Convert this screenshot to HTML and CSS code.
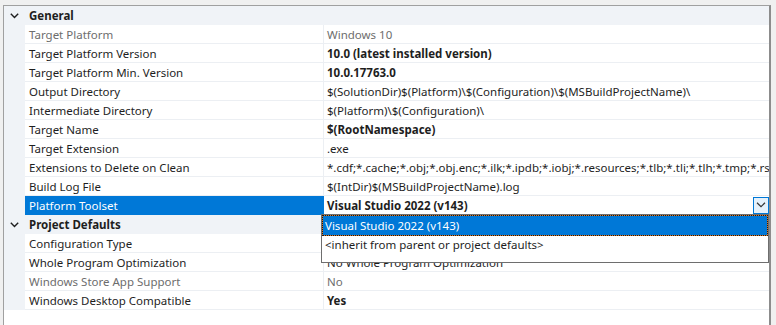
FILE: index.html
```html
<!DOCTYPE html>
<html lang="en">

<head>
    <meta charset="UTF-8" />
    <title>Property Pages</title>
    <link rel="stylesheet" href="styles.css">
</head>

<body>

    <div class="frame">

        <div class="category">
            <span class="toggle"><svg width="9" height="6" viewBox="0 0 9 6"><path d="M0.8 0.8 L4.5 4.5 L8.2 0.8" fill="none" stroke="#1e1e1e" stroke-width="1.4"/></svg></span>
            <span class="category-name">General</span>
        </div>
        <div class="prop">
            <span class="gutter"></span>
            <span class="name muted">Target Platform</span>
            <span class="value muted">Windows 10</span>
        </div>
        <div class="prop">
            <span class="gutter"></span>
            <span class="name">Target Platform Version</span>
            <span class="value bold">10.0 (latest installed version)</span>
        </div>
        <div class="prop">
            <span class="gutter"></span>
            <span class="name">Target Platform Min. Version</span>
            <span class="value bold">10.0.17763.0</span>
        </div>
        <div class="prop">
            <span class="gutter"></span>
            <span class="name">Output Directory</span>
            <span class="value">$(SolutionDir)$(Platform)\$(Configuration)\$(MSBuildProjectName)\</span>
        </div>
        <div class="prop">
            <span class="gutter"></span>
            <span class="name">Intermediate Directory</span>
            <span class="value">$(Platform)\$(Configuration)\</span>
        </div>
        <div class="prop">
            <span class="gutter"></span>
            <span class="name">Target Name</span>
            <span class="value bold">$(RootNamespace)</span>
        </div>
        <div class="prop">
            <span class="gutter"></span>
            <span class="name">Target Extension</span>
            <span class="value">.exe</span>
        </div>
        <div class="prop">
            <span class="gutter"></span>
            <span class="name">Extensions to Delete on Clean</span>
            <span class="value">*.cdf;*.cache;*.obj;*.obj.enc;*.ilk;*.ipdb;*.iobj;*.resources;*.tlb;*.tli;*.tlh;*.tmp;*.rsp;*.pgc;*.pgd</span>
        </div>
        <div class="prop">
            <span class="gutter"></span>
            <span class="name">Build Log File</span>
            <span class="value">$(IntDir)$(MSBuildProjectName).log</span>
        </div>
        <div class="prop">
            <span class="gutter"></span>
            <span class="name selected">Platform Toolset</span>
            <span class="value bold editing">
                <span class="value-text">Visual Studio 2022 (v143)</span>
                <span class="drop-button"><svg width="10" height="6" viewBox="0 0 10 6"><path d="M1 0.8 L5 4.6 L9 0.8" fill="none" stroke="#333" stroke-width="1.2"/></svg></span>
                <div class="dropdown">
                    <div class="option current">Visual Studio 2022 (v143)</div>
                    <div class="option">&lt;inherit from parent or project defaults&gt;</div>
                </div>
            </span>
        </div>

        <div class="category">
            <span class="toggle"><svg width="9" height="6" viewBox="0 0 9 6"><path d="M0.8 0.8 L4.5 4.5 L8.2 0.8" fill="none" stroke="#1e1e1e" stroke-width="1.4"/></svg></span>
            <span class="category-name">Project Defaults</span>
        </div>
        <div class="prop">
            <span class="gutter"></span>
            <span class="name">Configuration Type</span>
            <span class="value"></span>
        </div>
        <div class="prop">
            <span class="gutter"></span>
            <span class="name">Whole Program Optimization</span>
            <span class="value">No Whole Program Optimization</span>
        </div>
        <div class="prop">
            <span class="gutter"></span>
            <span class="name muted">Windows Store App Support</span>
            <span class="value muted">No</span>
        </div>
        <div class="prop">
            <span class="gutter"></span>
            <span class="name">Windows Desktop Compatible</span>
            <span class="value bold">Yes</span>
        </div>

    </div>

</body>

</html>
```

FILE: styles.css
```css
html,
body {
    margin: 0;
    height: 325px;
    overflow: hidden;
}

body {
    background: #f0f0f0;
    font-family: "Noto Sans", "Open Sans", sans-serif;
    font-size: 11.5px;
    color: #1e1e1e;
}

/* 外框 */
.frame {
    margin: 5px 0 0 3px;
    width: 765px;
    height: 330px;
    background: #fff;
    border-top: 1px solid #a0a0a0;
    border-left: 1px solid #a0a0a0;
    border-right: 2px solid #8c8c8c;
}

/* 分类行 */
.category {
    display: flex;
    align-items: center;
    height: 19px;
    background: #f0f3f7;
}

.toggle {
    width: 21px;
    display: flex;
    justify-content: center;
    padding-right: 1px;
    box-sizing: border-box;
}

.category-name {
    padding-left: 4px;
    font-weight: bold;
}

/* 属性行 */
.prop {
    display: flex;
    height: 19px;
}

.gutter {
    width: 21px;
    flex: none;
    background: #f0f3f7;
}

.name,
.value {
    display: flex;
    align-items: center;
    box-sizing: border-box;
    height: 19px;
    border-bottom: 1px solid #eceff3;
    white-space: nowrap;
    overflow: hidden;
}

.name {
    width: 299px;
    flex: none;
    padding-left: 4px;
    border-right: 1px solid #eceff3;
}

.value {
    flex: 1;
    min-width: 0;
    padding-left: 3px;
}

.muted {
    color: #6d6d6d;
}

.bold {
    font-weight: bold;
}

.selected {
    background: #0078d7;
    color: #fff;
    border-bottom-color: #0078d7;
    border-right-color: #0078d7;
}

/* 下拉编辑 */
.value.editing {
    position: relative;
    overflow: visible;
}

.value-text {
    flex: 1;
}

.drop-button {
    width: 14px;
    height: 15px;
    border: 1px solid #0078d7;
    background: #e5f1fb;
    display: flex;
    align-items: center;
    justify-content: center;
}

.dropdown {
    position: absolute;
    z-index: 2;
    top: 18px;
    left: -3px;
    right: 0;
    height: 47px;
    background: #fff;
    border: 1px solid #6e6e6e;
    font-weight: normal;
    color: #1e1e1e;
}

.option {
    height: 19px;
    line-height: 18px;
    padding-left: 3px;
    white-space: nowrap;
}

.option.current {
    box-sizing: border-box;
    height: 21px;
    line-height: 19px;
    padding-left: 2px;
    color: #fff;
    border: 1px dotted #1a1a1a;
    background: linear-gradient(#0078d7, #0078d7) padding-box, linear-gradient(#d8782a, #d8782a) border-box;
}
```
